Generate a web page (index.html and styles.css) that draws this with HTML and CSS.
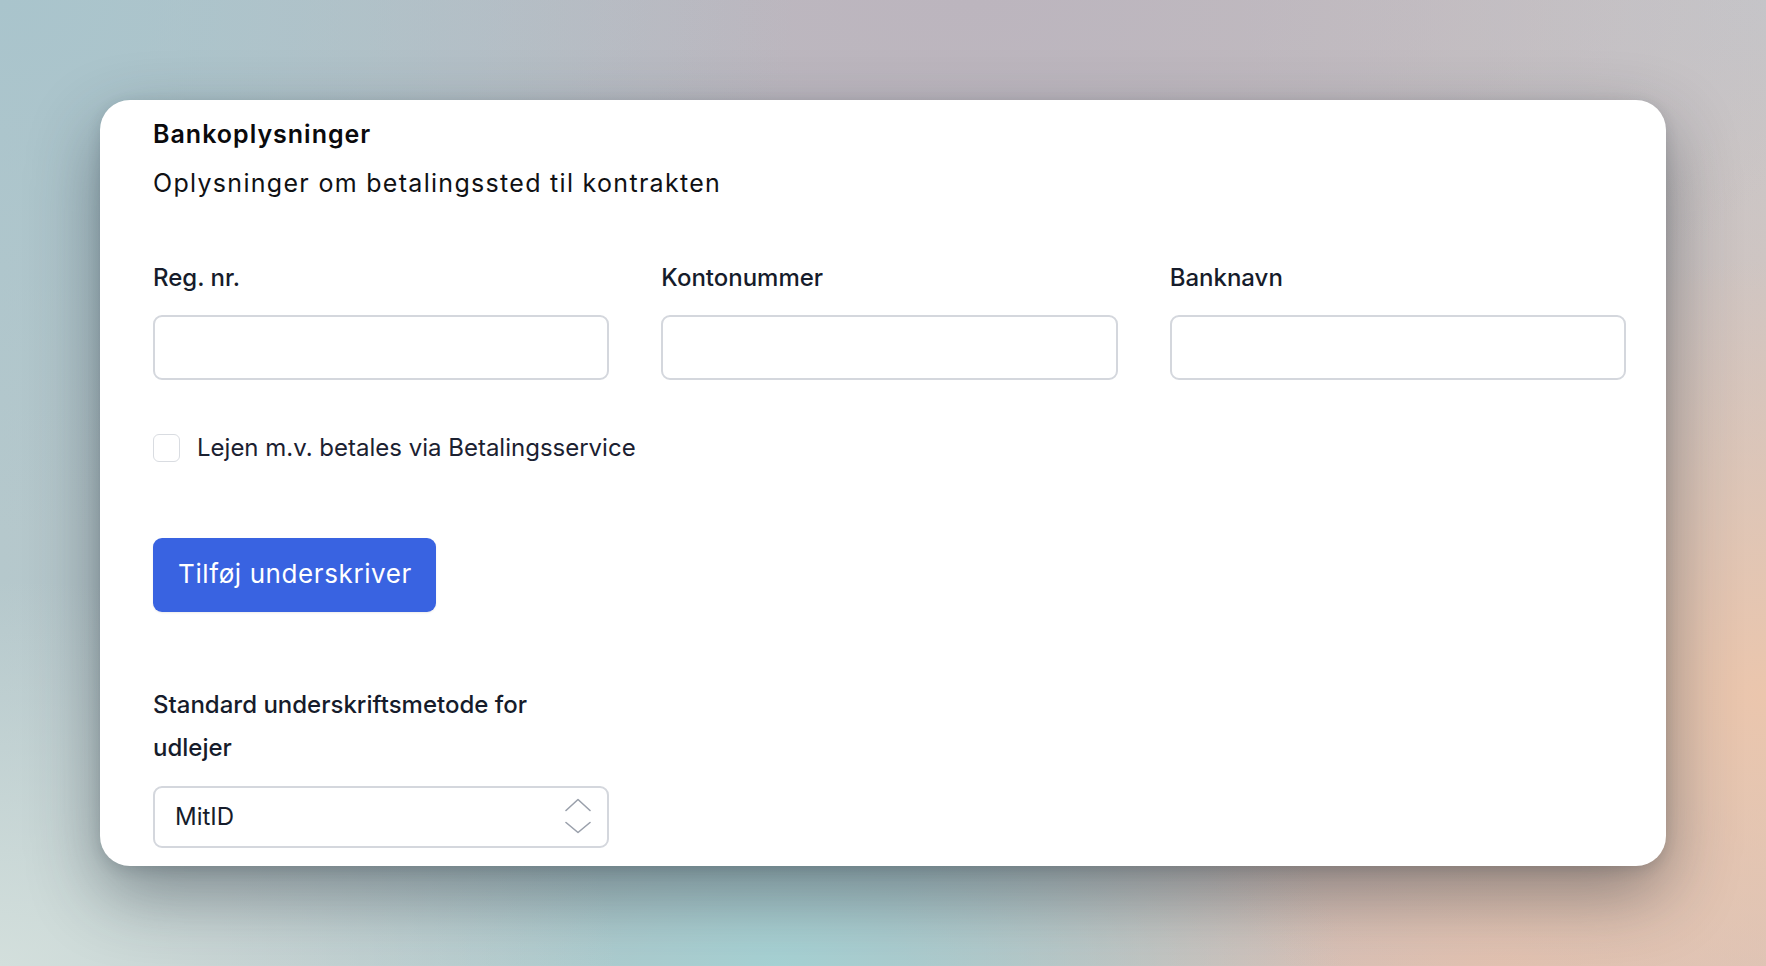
FILE: index.html
```html
<!DOCTYPE html>
<html lang="da">
<head>
<meta charset="utf-8">
<title>Bankoplysninger</title>
<link rel="stylesheet" href="styles.css">
</head>
<body>
<main class="card">
  <h1 class="title">Bankoplysninger</h1>
  <p class="subtitle">Oplysninger om betalingssted til kontrakten</p>

  <div class="fields">
    <div class="field">
      <label class="label" for="reg">Reg. nr.</label>
      <input class="input" id="reg" type="text">
    </div>
    <div class="field">
      <label class="label" for="konto">Kontonummer</label>
      <input class="input" id="konto" type="text">
    </div>
    <div class="field">
      <label class="label" for="bank">Banknavn</label>
      <input class="input" id="bank" type="text">
    </div>
  </div>

  <label class="check-row">
    <span class="checkbox"></span>
    <span class="check-text">Lejen m.v. betales via Betalingsservice</span>
  </label>

  <button class="btn" type="button">Tilføj underskriver</button>

  <div class="select-field">
    <div class="label select-label">Standard underskriftsmetode for udlejer</div>
    <div class="select">
      <span class="select-value">MitID</span>
      <svg class="chevrons" width="26" height="36" viewBox="0 0 26 36" aria-hidden="true">
        <polyline points="1,12.5 13,1.5 25,12.5" fill="none" stroke="#9aa0ab" stroke-width="1.6" stroke-linecap="round" stroke-linejoin="round"/>
        <polyline points="1,24.5 13,34.5 25,24.5" fill="none" stroke="#9aa0ab" stroke-width="1.6" stroke-linecap="round" stroke-linejoin="round"/>
      </svg>
    </div>
  </div>
</main>
</body>
</html>
```

FILE: styles.css
```css
* { box-sizing: border-box; }

html, body {
  margin: 0;
  height: 966px;
  overflow: hidden;
}

body {
  font-family: Inter, "Noto Sans", "Liberation Sans", sans-serif;
  background-color: #c0c2c4;
  background-image:
    radial-gradient(ellipse 45% 55% at 0% 0%, #a9c4cc 0%, rgba(169,196,204,0) 100%),
    radial-gradient(ellipse 50% 45% at 55% 0%, #bcb5be 0%, rgba(188,181,190,0) 100%),
    radial-gradient(ellipse 30% 30% at 100% 0%, #c6c6c9 0%, rgba(198,198,201,0) 100%),
    radial-gradient(ellipse 35% 45% at 100% 72%, #ebc6ad 0%, rgba(235,198,173,0) 100%),
    radial-gradient(ellipse 35% 40% at 0% 100%, #d3dfdc 0%, rgba(211,223,220,0) 100%),
    radial-gradient(ellipse 32% 30% at 44% 100%, #a6d2d4 0%, rgba(166,210,212,0) 100%),
    radial-gradient(ellipse 35% 35% at 85% 100%, #dfc1b3 0%, rgba(223,193,179,0) 100%),
    linear-gradient(90deg, #b5c8cc 0%, #bdbbc0 50%, #cfc5c2 100%);
}

.card {
  margin: 100px 100px 0 100px;
  height: 766px;
  background: #ffffff;
  border-radius: 30px;
  padding: 18px 40px 0 53px;
  overflow: hidden;
  box-shadow: 0 28px 70px rgba(30, 42, 52, 0.44), 0 4px 14px rgba(30, 42, 52, 0.14);
}

.title {
  margin: 0;
  font-size: 25px;
  line-height: 32px;
  font-weight: 600;
  color: #0a0a0c;
  letter-spacing: 1px;
}

.subtitle {
  margin: 15px 0 0 0;
  font-size: 25px;
  line-height: 36px;
  font-weight: 400;
  color: #101114;
  letter-spacing: 1.3px;
}

.fields {
  margin-top: 61px;
  display: grid;
  grid-template-columns: repeat(3, 1fr);
  column-gap: 52px;
}

.field {
  display: flex;
  flex-direction: column;
  gap: 21px;
}

.label {
  font-size: 24px;
  line-height: 32px;
  font-weight: 500;
  color: #161c2b;
}

.input {
  height: 65px;
  width: 100%;
  border: 2px solid #d4d7dd;
  border-radius: 9px;
  background: #fff;
  font: inherit;
  padding: 0 20px;
}

.check-row {
  margin-top: 52px;
  display: flex;
  align-items: center;
  gap: 17px;
}

.checkbox {
  width: 27px;
  height: 28px;
  border: 1.5px solid #d9dce1;
  border-radius: 6px;
  background: #fff;
  flex: none;
}

.check-text {
  font-size: 24px;
  line-height: 32px;
  font-weight: 400;
  color: #1b2131;
}

.btn {
  margin-top: 74px;
  display: flex;
  align-items: center;
  height: 74px;
  padding: 0 24px 3px 25px;
  background: #3963e1;
  color: #ffffff;
  border: none;
  border-radius: 9px;
  font-family: inherit;
  font-size: 26px;
  font-weight: 400;
  letter-spacing: 0.6px;
  box-shadow: 0 1px 2px rgba(0, 0, 0, 0.08);
}

.select-field {
  margin-top: 71px;
  width: 456px;
}

.select-label {
  line-height: 43px;
}

.select {
  margin-top: 17px;
  height: 62px;
  border: 2px solid #d4d7dd;
  border-radius: 9px;
  display: flex;
  align-items: center;
  justify-content: space-between;
  padding: 0 16px 2px 20px;
}

.select-value {
  font-size: 24px;
  font-weight: 400;
  color: #161c2b;
}

.chevrons {
  display: block;
}
```
